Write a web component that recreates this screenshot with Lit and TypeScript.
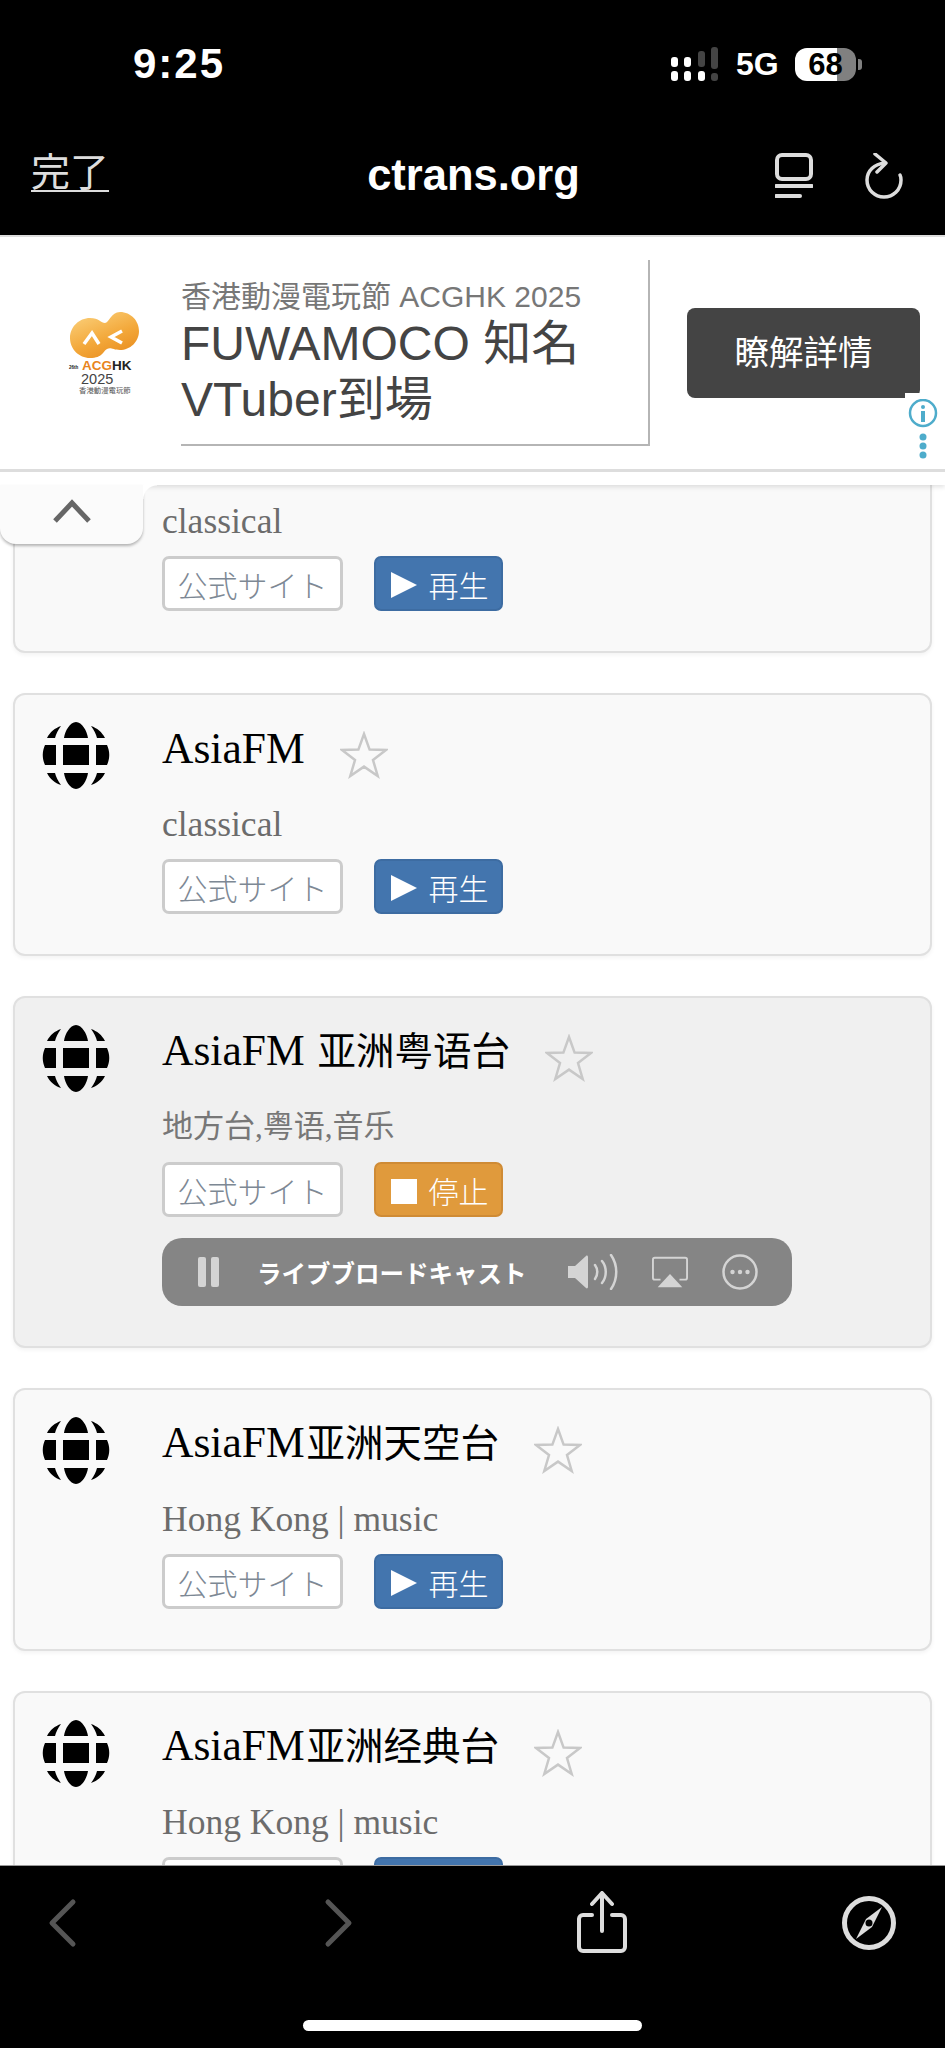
import { LitElement, html, css, svg } from 'lit';
import { customElement } from 'lit/decorators.js';
import { classMap } from 'lit/directives/class-map.js';

interface Station {
  latin: string;
  cjk?: string;
  desc: string;
  descCjk?: boolean;
  playing?: boolean;
}

const STATIONS: Station[] = [
  { latin: 'AsiaFM', desc: 'classical' },
  { latin: 'AsiaFM', desc: 'classical' },
  { latin: 'AsiaFM ', cjk: '亚洲粤语台', desc: '地方台,粤语,音乐', descCjk: true, playing: true },
  { latin: 'AsiaFM', cjk: '亚洲天空台', desc: 'Hong Kong | music' },
  { latin: 'AsiaFM', cjk: '亚洲经典台', desc: 'Hong Kong | music' },
];

const globe = html`<svg class="globe" viewBox="0 0 68 68">
  <path d="M21 23h26v20H21zM3 23h11v20H3C0 36 0 30 3 23zM54 23h11c3 7 3 13 0 20H54z" />
  <path d="M34 0c6 0 11 9 12 16H22C23 9 28 0 34 0zM19 4c-3 4-5 8-6 12H5C8 10 13 6 19 4zM49 4c3 4 5 8 6 12h8C60 10 55 6 49 4z" />
  <path transform="matrix(1 0 0 -1 0 67)" d="M34 0c6 0 11 9 12 16H22C23 9 28 0 34 0zM19 4c-3 4-5 8-6 12H5C8 10 13 6 19 4zM49 4c3 4 5 8 6 12h8C60 10 55 6 49 4z" />
</svg>`;

const star = html`<svg class="star" viewBox="0 0 48 48">
  <polygon points="24,3 29.6,18.6 46,18.9 33,29 37.7,45 24,35.6 10.3,45 15,29 2,18.9 18.4,18.6" />
</svg>`;

@customElement('app-root')
export class AppRoot extends LitElement {
  static styles = css`
    :host {
      display: block;
      width: 945px;
      height: 2048px;
      overflow: hidden;
      font-family: 'Liberation Serif', 'Noto Sans CJK JP', serif;
      background: #fff;
    }
    .page {
      position: relative;
      display: flex;
      flex-direction: column;
      height: 2048px;
    }

    /* top chrome */
    .top {
      height: 235px;
      background: #000;
      color: #fff;
      font-family: 'Liberation Sans', 'Noto Sans CJK JP', sans-serif;
      flex: none;
    }
    .status {
      height: 128px;
      display: flex;
      align-items: center;
      padding-left: 133px;
      padding-right: 83px;
    }
    .time {
      font-size: 42px;
      font-weight: 700;
      letter-spacing: 2px;
      flex: 1;
    }
    .signal {
      width: 48px;
      height: 34px;
    }
    .net {
      font-size: 32px;
      font-weight: 700;
      margin-left: 17px;
      width: 59px;
    }
    .battery {
      width: 61px;
      height: 33px;
      border-radius: 12px;
      background: linear-gradient(90deg, #fff 0 69%, #808080 69%);
      color: #000;
      font-size: 31px;
      font-weight: 700;
      line-height: 33px;
      text-align: center;
    }
    .nub {
      width: 4px;
      height: 11px;
      margin-left: 2px;
      border-radius: 0 3px 3px 0;
      background: #808080;
    }
    .nav {
      height: 95px;
      display: flex;
      align-items: center;
      position: relative;
      padding: 0 42px 0 31px;
    }
    .done {
      font-size: 39px;
      line-height: 46px;
      color: #ddd;
      text-decoration: underline;
      text-underline-offset: 4px;
      text-decoration-thickness: 2px;
      width: 79px;
      margin-top: -5px;
      white-space: nowrap;
    }
    .host {
      flex: 1;
      text-align: center;
      font-size: 43.5px;
      font-weight: 700;
      padding-left: 62px;
    }
    .nav svg {
      fill: none;
      stroke: #ddd;
    }
    .tabs-icon {
      width: 38px;
      height: 46px;
    }
    .reload-icon {
      width: 38px;
      height: 46px;
      margin-left: 52px;
    }

    /* ad */
    .ad {
      position: relative;
      height: 237px;
      box-sizing: border-box;
      flex: none;
      display: flex;
      align-items: center;
      padding-left: 65px;
      background: #fff;
      border-top: 2px solid #ddd;
      border-bottom: 3px solid #ddd;
      font-family: 'Liberation Sans', 'Noto Sans CJK TC', sans-serif;
      z-index: 2;
    }
    .logo {
      width: 77px;
      height: 88px;
      flex: none;
    }
    .copy {
      width: 469px;
      height: 186px;
      box-sizing: border-box;
      margin-left: 39px;
      border-right: 2px solid #b5b5b5;
      border-bottom: 2px solid #b5b5b5;
      padding-top: 19px;
      flex: none;
    }
    .kicker {
      font-size: 30px;
      line-height: 36px;
      color: #777;
      white-space: nowrap;
    }
    .headline {
      font-size: 48px;
      line-height: 56px;
      color: #444;
      margin-top: 1px;
    }
    .cta {
      position: relative;
      width: 233px;
      height: 90px;
      margin-left: 37px;
      flex: none;
      background: #444;
      border-radius: 8px;
      color: #fff;
      font-size: 34.5px;
      line-height: 90px;
      text-align: center;
    }
    .cta::after {
      content: '';
      position: absolute;
      right: 0;
      bottom: 0;
      width: 15px;
      height: 5px;
      background: #fff;
    }
    .adinfo {
      position: absolute;
      left: 908px;
      top: 162px;
      width: 30px;
      height: 66px;
    }
    .strip {
      height: 13px;
      flex: none;
      background: #fff;
      box-shadow: 0 2px 5px rgba(0, 0, 0, 0.12);
      z-index: 1;
    }

    /* back to top tab */
    .up-tab {
      position: absolute;
      left: 0;
      top: 485px;
      width: 143px;
      height: 59px;
      background: #fbfbfb;
      border-radius: 0 0 16px 16px;
      box-shadow: 0 2px 3px rgba(0, 0, 0, 0.28);
      z-index: 3;
      display: flex;
      justify-content: center;
      padding-top: 14px;
      box-sizing: border-box;
    }
    .up-tab::after {
      content: '';
      position: absolute;
      left: 100%;
      top: 0;
      width: 14px;
      height: 14px;
      background: radial-gradient(circle at 100% 100%, transparent 13px, #fff 14px);
    }
    .up-tab svg {
      width: 38px;
      height: 24px;
      fill: none;
      stroke: #666;
      stroke-width: 5;
    }

    /* station list */
    .list {
      flex: 1;
      min-height: 0;
      overflow: hidden;
      display: flex;
      flex-direction: column;
      gap: 40px;
      padding: 0 13px;
    }
    .card {
      flex: none;
      display: flex;
      gap: 52px;
      box-sizing: border-box;
      padding: 29px 0 40px 27px;
      background: #f9f9f9;
      border: 2px solid #e0e0e0;
      border-radius: 12px;
      box-shadow: 0 2px 4px rgba(0, 0, 0, 0.05);
    }
    .card:first-child {
      margin-top: -95px;
    }
    .card.playing {
      background: #f0f0f0;
    }
    .globe {
      width: 68px;
      height: 68px;
      flex: none;
      fill: #000;
      margin-top: -2px;
    }
    .body {
      flex: 1;
      min-width: 0;
    }
    .title-row {
      display: flex;
      align-items: center;
      height: 50px;
    }
    .title {
      font-size: 43.5px;
      line-height: 50px;
      color: #000;
      white-space: pre;
      margin-top: -3px;
    }
    .title .cjk {
      font-size: 38.5px;
      margin-left: 2px;
    }
    .star {
      width: 48px;
      height: 48px;
      margin: 12px 0 0 35px;
      fill: none;
      stroke: #c8c8c8;
      stroke-width: 2.5;
      flex: none;
    }
    .desc {
      font-size: 35.5px;
      line-height: 46px;
      color: #6c6c6c;
      margin-top: 27px;
    }
    .desc.cjk {
      font-size: 31px;
      color: #777;
    }
    .actions {
      display: flex;
      gap: 31px;
      margin-top: 12px;
    }
    .btn {
      height: 55px;
      box-sizing: border-box;
      border-radius: 7px;
      font-size: 30px;
      font-weight: 300;
      display: flex;
      align-items: center;
      justify-content: center;
      white-space: nowrap;
    }
    .site {
      width: 181px;
      background: #fff;
      border: 3px solid #ccc;
      color: #7d8894;
    }
    .play,
    .stop {
      width: 129px;
      gap: 12px;
      color: #fff;
    }
    .play {
      background: #4375ae;
      border: 2px solid #3d6ca2;
    }
    .stop {
      background: #e09a3c;
      border: 2px solid #cf8b35;
    }
    .play svg {
      width: 26px;
      height: 30px;
      fill: #fff;
      margin: 2px 0 0 2px;
    }
    .stop svg {
      width: 26px;
      height: 25px;
      fill: #fff;
      margin: 4px 0 0 2px;
    }

    /* inline audio player */
    .player {
      width: 630px;
      height: 68px;
      margin-top: 21px;
      background: #858585;
      border-radius: 20px;
      display: flex;
      align-items: center;
      padding-left: 36px;
      box-sizing: border-box;
      font-family: 'Noto Sans CJK JP', sans-serif;
    }
    .player svg {
      flex: none;
      fill: #d4d4d4;
      stroke: none;
    }
    .pause {
      width: 22px;
      height: 30px;
    }
    .live {
      width: 268px;
      margin-left: 37px;
      color: #fff;
      font-size: 24.5px;
      font-weight: 700;
      white-space: nowrap;
    }
    .speaker {
      width: 50px;
      height: 36px;
      margin-left: 43px;
    }
    .airplay {
      width: 36px;
      height: 32px;
      margin-left: 34px;
    }
    .more {
      width: 36px;
      height: 36px;
      margin-left: 34px;
    }

    /* bottom chrome */
    .bottom {
      height: 183px;
      flex: none;
      box-sizing: border-box;
      background: #000;
      border-top: 1px solid #999;
      z-index: 2;
      display: flex;
      flex-direction: column;
      align-items: center;
    }
    .tools {
      width: 100%;
      box-sizing: border-box;
      height: 154px;
      display: flex;
      justify-content: space-between;
      padding: 25px 48px 0 40px;
    }
    .tools svg {
      width: 56px;
      height: 64px;
      fill: none;
    }
    .home {
      width: 339px;
      height: 11px;
      border-radius: 6px;
      background: #fff;
    }
  `;

  private renderCard(s: Station) {
    const playing = !!s.playing;
    return html`<div class=${classMap({ card: true, playing })}>
      ${globe}
      <div class="body">
        <div class="title-row">
          <span class="title">${s.latin}${s.cjk ? html`<span class="cjk">${s.cjk}</span>` : ''}</span>
          ${star}
        </div>
        <div class=${classMap({ desc: true, cjk: !!s.descCjk })}>${s.desc}</div>
        <div class="actions">
          <div class="btn site">公式サイト</div>
          ${playing
            ? html`<div class="btn stop">
                <svg viewBox="0 0 26 25"><rect width="26" height="25" /></svg>停止
              </div>`
            : html`<div class="btn play">
                <svg viewBox="0 0 26 30"><polygon points="0,2 26,15 0,28" /></svg>再生
              </div>`}
        </div>
        ${playing ? this.renderPlayer() : ''}
      </div>
    </div>`;
  }

  private renderPlayer() {
    return html`<div class="player">
      <svg class="pause" viewBox="0 0 22 30">
        <rect width="8" height="30" rx="2" /><rect x="13" width="8" height="30" rx="2" />
      </svg>
      <div class="live">ライブブロードキャスト</div>
      <svg class="speaker" viewBox="0 0 50 36">
        <path d="M0 12h7L18 2c1-1 2 0 2 1v30c0 1-1 2-2 1L7 24H0z" />
        <g fill="none" stroke="#d4d4d4" stroke-width="2.5" stroke-linecap="round">
          <path d="M27 11c3 4 3 10 0 14" />
          <path d="M34 7c5 6 5 16 0 22" />
          <path d="M43 1c7 10 7 24 0 34" />
        </g>
      </svg>
      <svg class="airplay" viewBox="0 0 38 32">
        <path d="M9 24H3a2 2 0 0 1-2-2V3a2 2 0 0 1 2-2h32a2 2 0 0 1 2 2v19a2 2 0 0 1-2 2h-6" fill="none" stroke="#d4d4d4" stroke-width="2" />
        <polygon points="19,18 32,32 6,32" />
      </svg>
      <svg class="more" viewBox="0 0 36 36">
        <circle cx="18" cy="18" r="16.5" fill="none" stroke="#d4d4d4" stroke-width="2.5" />
        <circle cx="10.5" cy="18" r="2.2" /><circle cx="18" cy="18" r="2.2" /><circle cx="25.5" cy="18" r="2.2" />
      </svg>
    </div>`;
  }

  private renderLogo() {
    return svg`<svg class="logo" viewBox="0 0 77 88">
      <defs>
        <linearGradient id="blob" x1="0.1" y1="0" x2="0.7" y2="1">
          <stop offset="0" stop-color="#fbd27e" />
          <stop offset="0.6" stop-color="#f3a83a" />
          <stop offset="1" stop-color="#e98e20" />
        </linearGradient>
      </defs>
      <path fill="url(#blob)" d="M25 9C34 9 36 14 40 14C44 14 46 3 55 3C66 3 74 12 74 22C74 33 65 41 55 41C48 41 46 38 42 40C38 42 38 49 25 49C14 49 5 40 5 29C5 18 14 9 25 9z" />
      <path fill="none" stroke="#fff" stroke-width="3.5" d="M19 35l8-11 7 11M57 22l-11 6 11 6" />
      <text x="4" y="60" font-size="4.5" font-weight="700" fill="#222" font-family="Liberation Sans">26th</text>
      <text x="17" y="61" font-size="13.5" font-weight="700" fill="#e8851c" font-family="Liberation Sans">ACG<tspan fill="#222">HK</tspan></text>
      <text x="16" y="75" font-size="14.5" fill="#444" font-family="Liberation Sans">2025</text>
      <text x="14" y="84" font-size="7.4" fill="#555" font-family="Noto Sans CJK TC">香港動漫電玩節</text>
    </svg>`;
  }

  render() {
    return html`<div class="page">
      <div class="top">
        <div class="status">
          <div class="time">9:25</div>
          <svg class="signal" viewBox="0 0 48 34">
            <g fill="#fff">
              <rect x="0" y="10" width="7" height="10" rx="3" /><rect x="0" y="24" width="7" height="10" rx="3" />
              <rect x="13" y="10" width="7" height="10" rx="3" /><rect x="13" y="24" width="7" height="10" rx="3" />
              <rect x="27" y="24" width="7" height="10" rx="3" />
            </g>
            <g fill="#444">
              <rect x="27" y="4" width="7" height="16" rx="3" />
              <rect x="40" y="0" width="7" height="22" rx="3" /><rect x="40" y="26" width="7" height="8" rx="3" />
            </g>
          </svg>
          <div class="net">5G</div>
          <div class="battery">68</div>
          <div class="nub"></div>
        </div>
        <div class="nav">
          <div class="done">完了</div>
          <div class="host">ctrans.org</div>
          <svg class="tabs-icon" viewBox="0 0 38 46">
            <rect x="2" y="2" width="34" height="24" rx="5" stroke-width="4" />
            <path d="M1 33h36" stroke-width="4" stroke-linecap="round" />
            <path d="M1 43h24" stroke-width="4" stroke-linecap="round" />
          </svg>
          <svg class="reload-icon" viewBox="0 0 38 46">
            <path d="M20 10C9 11 2 18 2 27c0 10 8 17 17 17s17-7 17-17c0-2 0-3-1-5" stroke-width="3.5" stroke-linecap="round" />
            <path d="M10 1l11 9-9 9" stroke-width="3.5" stroke-linecap="round" stroke-linejoin="round" />
          </svg>
        </div>
      </div>

      <div class="ad">
        ${this.renderLogo()}
        <div class="copy">
          <div class="kicker">香港動漫電玩節 ACGHK 2025</div>
          <div class="headline">FUWAMOCO 知名<br />VTuber到場</div>
        </div>
        <div class="cta">瞭解詳情</div>
        <svg class="adinfo" viewBox="0 0 30 66">
          <circle cx="15" cy="14" r="13" fill="#fff" stroke="#4eaccb" stroke-width="2.5" />
          <circle cx="15" cy="8" r="2" fill="#4eaccb" />
          <rect x="13" y="12" width="4" height="11" fill="#4eaccb" />
          <circle cx="15" cy="38" r="3.5" fill="#4eaccb" />
          <circle cx="15" cy="47" r="3.5" fill="#4eaccb" />
          <circle cx="15" cy="56" r="3.5" fill="#4eaccb" />
        </svg>
      </div>
      <div class="strip"></div>

      <div class="up-tab">
        <svg viewBox="0 0 38 24"><path d="M2 22L19 4l17 18" /></svg>
      </div>

      <div class="list">${STATIONS.map((s) => this.renderCard(s))}</div>

      <div class="bottom">
        <div class="tools">
          <svg viewBox="0 0 56 64" stroke="#555" stroke-width="5" stroke-linecap="round" stroke-linejoin="round">
            <path d="M33 11L12 32l21 21" />
          </svg>
          <svg viewBox="0 0 56 64" stroke="#555" stroke-width="5" stroke-linecap="round" stroke-linejoin="round">
            <path d="M21 11l21 21-21 21" />
          </svg>
          <svg viewBox="0 0 56 64" stroke="#ddd" stroke-width="4" stroke-linecap="round" stroke-linejoin="round">
            <path d="M28 40V3M18 13L28 2l10 11" />
            <path d="M18 24h-9a4 4 0 0 0-4 4v28a4 4 0 0 0 4 4h38a4 4 0 0 0 4-4V28a4 4 0 0 0-4-4h-9" />
          </svg>
          <svg viewBox="0 0 56 64">
            <circle cx="28" cy="32" r="24.5" stroke="#ddd" stroke-width="5" />
            <path d="M41 16L31 36 15 48l10-20z" fill="#ddd" />
            <circle cx="28" cy="32" r="3.5" fill="#000" />
          </svg>
        </div>
        <div class="home"></div>
      </div>
    </div>`;
  }
}
